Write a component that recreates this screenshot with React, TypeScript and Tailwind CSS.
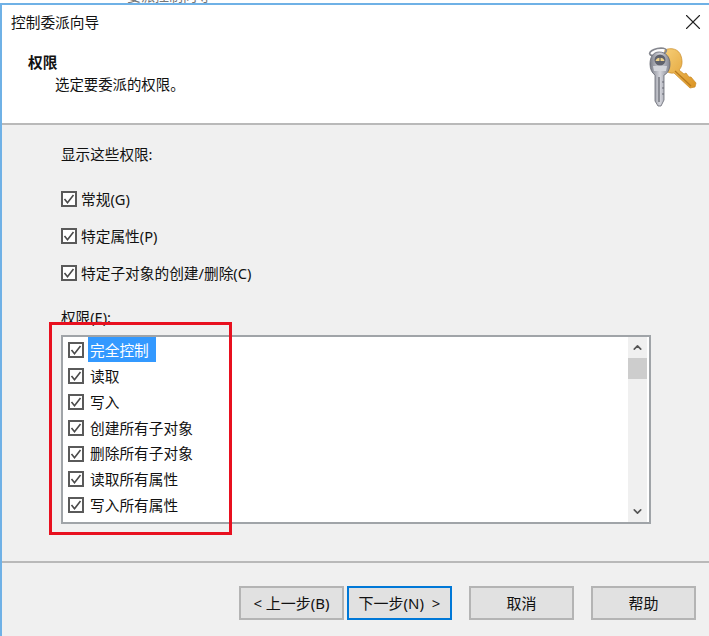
import React from 'react';
import { ChevronUp, ChevronDown, X } from 'lucide-react';

const SHOW_OPTIONS = ['常规(G)', '特定属性(P)', '特定子对象的创建/删除(C)'];
const PERMISSIONS = ['完全控制', '读取', '写入', '创建所有子对象', '删除所有子对象', '读取所有属性', '写入所有属性'];

const CheckBox = () => (
  <span className="flex h-4 w-4 shrink-0 items-center justify-center border-2 border-[#5a5a5a] bg-white">
    <svg viewBox="0 0 12 12" className="h-3 w-3">
      <path d="M1.5 6 L4.5 9.8 L10.5 2" fill="none" stroke="#4a4a4a" strokeWidth="1.6" />
    </svg>
  </span>
);

const Keys = () => (
  <svg viewBox="0 0 60 66" className="h-[66px] w-[60px]">
    <defs>
      <linearGradient id="gold" x1="0" y1="0" x2="1" y2="1">
        <stop offset="0" stopColor="#f6cf78" />
        <stop offset="1" stopColor="#dc9422" />
      </linearGradient>
      <linearGradient id="silver" x1="0" y1="0" x2="1" y2="0">
        <stop offset="0" stopColor="#7b7e88" />
        <stop offset="0.5" stopColor="#d4d5dc" />
        <stop offset="1" stopColor="#80838f" />
      </linearGradient>
    </defs>
    {/* gold key */}
    <path d="M24 3 C30 0 38 2 40 9 C42 15 41 20 38 23 L43 27 L45 26 L48 30 L50 30 L55 36 L54 40 L49 41 L33 26 C27 27 23 23 22 17 Z" fill="url(#gold)" stroke="#c98a25" strokeWidth="0.7" />
    <path d="M34 24 L50 39" stroke="#b87a1c" strokeWidth="1.2" />
    {/* ring */}
    <ellipse cx="17" cy="5" rx="8.5" ry="3.6" fill="none" stroke="#85878f" strokeWidth="1.7" transform="rotate(-12 17 5)" />
    {/* silver key */}
    <path d="M18 5 C25 5 29 10 29 17 C29 23 26 27 23 28 L23 53 L20 59 L17 59 L14 54 L14 28 C11 26 9 22 9 17 C9 10 12 5 18 5 Z" fill="url(#silver)" stroke="#666872" strokeWidth="0.8" />
    <circle cx="19" cy="13" r="5.5" fill="#5f626c" />
    <path d="M14.5 14 C15 9.5 23 9.5 23.5 14 Z" fill="#f0d48d" />
    <path d="M19 9 L19 15" stroke="#565862" strokeWidth="1" />
    <path d="M12 19 L26 19 L25 24 L13 24 Z" fill="#d4d6dc" />
    <path d="M18 30 L18 55" stroke="#6a6c76" strokeWidth="1.3" />
    <path d="M21 35 L23 35 M21 41 L23 41 M21 47 L23 47" stroke="#666873" strokeWidth="1.2" />
  </svg>
);

const WizardButton = ({ label, primary }: { label: string; primary?: boolean }) => (
  <button
    type="button"
    className={`flex h-[34px] w-[105px] items-center justify-center whitespace-pre border-2 bg-[#e1e1e1] text-[15px] text-[#111111] ${
      primary ? 'border-[#0078d7]' : 'border-[#b4b4b4]'
    }`}
  >
    {label}
  </button>
);

export default function App() {
  return (
    <div className="relative h-[636px] w-[709px] overflow-hidden bg-white font-['Noto_Sans','Noto_Sans_CJK_SC',sans-serif] text-[#111111]">
      {/* cut-off text of the window behind */}
      <div className="h-[3px] overflow-hidden bg-white pl-[127px] text-[14px] leading-none text-[#777777]">
        <div className="-mt-[11px]">委派控制向导</div>
      </div>
      <div className="flex h-[633px] flex-col border-l-2 border-t-2 border-[#6fb1e6]">
        {/* title bar */}
        <div className="flex h-[34px] items-center justify-between pl-[9px] pr-[3px]">
          <span className="text-[14.7px] leading-none">控制委派向导</span>
          <X className="h-[26px] w-[26px] text-[#222222]" strokeWidth={1} />
        </div>

        {/* header */}
        <div className="flex h-[84px] justify-between pr-[8px]">
          <div className="pl-[26px] pt-[12px]">
            <div className="text-[14.7px] font-bold leading-[22px]">权限</div>
            <div className="pl-[27px] text-[14.4px] leading-[24px]">选定要委派的权限。</div>
          </div>
          <div className="pt-[8px]">
            <Keys />
          </div>
        </div>

        <div className="h-[2px] bg-[#b9b9b9]" />

        {/* body */}
        <div className="h-[436px] bg-[#f0f0f0] pl-[59px] pr-[58px] pt-[19px]">
          <div className="text-[14.6px] leading-[20px]">显示这些权限:</div>
          <div className="mt-[25px] flex flex-col gap-[17px]">
            {SHOW_OPTIONS.map(o => (
              <div key={o} className="flex h-[20px] items-center gap-[4px] text-[14.7px]">
                <CheckBox />
                <span>{o}</span>
              </div>
            ))}
          </div>
          <div className="mt-[24px] text-[14.6px] leading-[20px]">权限(E):</div>

          <div className="mt-[8px] flex h-[189px] w-[590px] border-2 border-[#a0a4a8] bg-white pr-[2px]">
            <div className="flex-1 pl-[5px]">
              {PERMISSIONS.map((p, i) => (
                <div key={p} className="flex h-[25.9px] items-center gap-[4px] text-[14.7px]">
                  <CheckBox />
                  <span className={i === 0 ? 'flex h-[25px] items-center bg-[#3399ff] px-[2px] pr-[7px] text-white' : 'px-[2px]'}>
                    {p}
                  </span>
                </div>
              ))}
            </div>
            <div className="flex w-[19px] flex-col bg-[#f0f0f0]">
              <div className="flex h-[21px] items-center justify-center">
                <ChevronUp className="h-[13px] w-[13px] text-[#555555]" strokeWidth={3} />
              </div>
              <div className="h-[21px] bg-[#cdcdcd]" />
              <div className="flex-1" />
              <div className="flex h-[21px] items-center justify-center">
                <ChevronDown className="h-[13px] w-[13px] text-[#555555]" strokeWidth={3} />
              </div>
            </div>
          </div>
        </div>

        <div className="h-[2px] bg-[#b9b9b9]" />

        {/* footer */}
        <div className="flex flex-1 items-start bg-[#f0f0f0] pl-[237px] pt-[23px]">
          <WizardButton label="< 上一步(B)" />
          <div className="ml-[3px]">
            <WizardButton label="下一步(N)  >" primary />
          </div>
          <div className="ml-[17px]">
            <WizardButton label="取消" />
          </div>
          <div className="ml-[17px]">
            <WizardButton label="帮助" />
          </div>
        </div>
      </div>

      {/* red annotation box */}
      <div className="absolute left-[49px] top-[322px] h-[213px] w-[183px] border-[3px] border-[#e8101f]" />
    </div>
  );
}
